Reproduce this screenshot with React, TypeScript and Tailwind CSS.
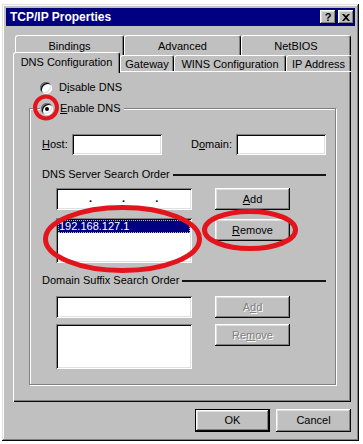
import React from 'react'

// win95 bevels
const raised =
  'shadow-[inset_-1px_-1px_#0a0a0a,inset_1px_1px_#ffffff,inset_-2px_-2px_#808080,inset_2px_2px_#dfdfdf]'
const sunken =
  'shadow-[inset_1px_1px_#808080,inset_-1px_-1px_#ffffff,inset_2px_2px_#0a0a0a,inset_-2px_-2px_#dfdfdf]'
const disabledText = 'text-[#808080] [text-shadow:1px_1px_0_#ffffff]'

function Btn({
  children,
  disabled,
  isDefault,
  className = '',
}: {
  children: React.ReactNode
  disabled?: boolean
  isDefault?: boolean
  className?: string
}) {
  if (isDefault) {
    return (
      <div className={`w-[75px] h-[23px] border border-black bg-[#c0c0c0] ${className}`}>
        <div className={`w-full h-full flex items-center justify-center ${raised}`}>{children}</div>
      </div>
    )
  }
  return (
    <div
      className={`w-[75px] h-[22px] bg-[#c0c0c0] flex items-center justify-center ${raised} ${
        disabled ? disabledText : ''
      } ${className}`}
    >
      {children}
    </div>
  )
}

function Radio({ checked }: { checked?: boolean }) {
  return (
    <div className={`w-[12px] h-[12px] rounded-full bg-white flex items-center justify-center ${sunken}`}>
      {checked && <div className="w-[4px] h-[4px] rounded-full bg-black" />}
    </div>
  )
}

function SectionLabel({ text }: { text: string }) {
  return (
    <div className="flex items-center h-[13px] w-[284px]">
      <span className="whitespace-nowrap">{text}</span>
      <div className="flex-1 ml-[3px] h-[2px] bg-[#141414]" />
    </div>
  )
}

function BackTab({ label, w }: { label: string; w: string }) {
  return (
    <div
      className={`${w} h-[20px] pt-[4px] text-center border-t border-l border-white border-r border-r-black rounded-t-[3px] shadow-[inset_-1px_0_#808080]`}
    >
      {label}
    </div>
  )
}

function FrontTab({ label, w }: { label: string; w: string }) {
  return (
    <div
      className={`${w} h-[16px] pt-[2px] text-center border-t border-l border-white border-r border-r-black rounded-t-[3px] shadow-[inset_-1px_0_#808080] bg-[#c0c0c0]`}
    >
      {label}
    </div>
  )
}

export default function App() {
  return (
    <div className="relative w-[363px] h-[444px] bg-white pt-[4px] pl-[2px] text-[11px] leading-[13px] text-black font-['Liberation_Sans',Arial,sans-serif]">
      <div className="w-[357px] h-[437px] bg-[#c0c0c0] p-[4px] shadow-[inset_-1px_-1px_#0a0a0a,inset_1px_1px_#dfdfdf,inset_-2px_-2px_#808080,inset_2px_2px_#ffffff]">
        {/* title bar */}
        <div className="flex items-center h-[18px] bg-[#000080] pl-[4px] pr-[1px]">
          <span className="flex-1 text-white font-bold text-[12px]">TCP/IP Properties</span>
          <div className={`w-[16px] h-[14px] bg-[#c0c0c0] flex items-center justify-center font-bold text-[11px] ${raised}`}>
            ?
          </div>
          <div className={`ml-[2px] w-[16px] h-[14px] bg-[#c0c0c0] flex items-center justify-center ${raised}`}>
            <svg width="8" height="7" viewBox="0 0 8 7">
              <path d="M0 0h2l2 2 2-2h2L5 3.5 8 7H6L4 5 2 7H0l3-3.5z" fill="#000" />
            </svg>
          </div>
        </div>

        <div className="ml-[7px] w-[338px] mt-[9px]">
          {/* tabs */}
          <div className="flex pl-[2px]">
            <BackTab label="Bindings" w="w-[109px]" />
            <BackTab label="Advanced" w="w-[117px]" />
            <BackTab label="NetBIOS" w="w-[110px]" />
          </div>
          <div className="relative z-10 flex items-end h-[19px] -mt-[3px]">
            <div className="w-[107px] h-[21px] -mb-[2px] pt-[3px] text-center bg-[#c0c0c0] border-t border-l border-white border-r border-r-black rounded-t-[3px] shadow-[inset_-1px_0_#808080]">
              DNS Configuration
            </div>
            <FrontTab label="Gateway" w="w-[54px]" />
            <FrontTab label="WINS Configuration" w="w-[112px]" />
            <FrontTab label="IP Address" w="w-[65px]" />
          </div>

          {/* panel */}
          <div className="h-[331px] pt-[10px] shadow-[inset_1px_1px_#ffffff,inset_-1px_-1px_#0a0a0a,inset_-2px_-2px_#808080]">
            <div className="flex items-center h-[13px] pl-[27px] gap-[7px]">
              <Radio />
              <span>
                D<u>i</u>sable DNS
              </span>
            </div>

            <div className="relative ml-[16px] mt-[14px] w-[307px] h-[277px] border border-[#808080] shadow-[inset_1px_1px_#ffffff,1px_1px_#ffffff] pl-[12px] pt-[25px]">
              <div className="absolute -top-[7px] left-[10px] flex items-center gap-[7px] bg-[#c0c0c0] pl-[1px] pr-[3px] h-[13px]">
                <Radio checked />
                <span>
                  <u>E</u>nable DNS
                </span>
              </div>

              <div className="flex items-center h-[21px]">
                <span className="w-[30px]">
                  <u>H</u>ost:
                </span>
                <div className={`w-[90px] h-[21px] bg-white ${sunken}`} />
                <span className="ml-[29px] w-[45px]">
                  D<u>o</u>main:
                </span>
                <div className={`w-[90px] h-[21px] bg-white ${sunken}`} />
              </div>

              <div className="mt-[13px]">
                <SectionLabel text="DNS Server Search Order" />
              </div>

              <div className="mt-[7px] ml-[14px] flex gap-[23px]">
                <div className={`w-[136px] h-[22px] bg-white flex items-start pt-[4px] font-bold ${sunken}`}>
                  <span className="w-[33px]" />
                  <span>.</span>
                  <span className="w-[30px]" />
                  <span>.</span>
                  <span className="w-[30px]" />
                  <span>.</span>
                </div>
                <Btn>
                  <u>A</u>dd
                </Btn>
              </div>

              <div className="mt-[8px] ml-[14px] flex gap-[23px] items-start">
                <div className={`w-[136px] h-[45px] bg-white p-[2px] ${sunken}`}>
                  <div className="h-[13px] bg-[#000080] text-white pl-[1px] outline-1 outline-dotted outline-[#c0c0c0] -outline-offset-1">
                    192.168.127.1
                  </div>
                </div>
                <Btn className="mt-[1px]">
                  <u>R</u>emove
                </Btn>
              </div>

              <div className="mt-[11px]">
                <SectionLabel text="Domain Suffix Search Order" />
              </div>

              <div className="mt-[9px] ml-[14px] flex gap-[23px]">
                <div className={`w-[136px] h-[22px] bg-white ${sunken}`} />
                <Btn disabled>
                  A<u>d</u>d
                </Btn>
              </div>

              <div className="mt-[6px] ml-[14px] flex gap-[23px] items-start">
                <div className={`w-[136px] h-[45px] bg-white ${sunken}`} />
                <Btn disabled>
                  Re<u>m</u>ove
                </Btn>
              </div>
            </div>
          </div>

          {/* dialog buttons */}
          <div className="mt-[7px] flex justify-end gap-[6px]">
            <Btn isDefault>OK</Btn>
            <div className={`w-[75px] h-[23px] bg-[#c0c0c0] flex items-center justify-center ${raised}`}>Cancel</div>
          </div>
        </div>
      </div>

      {/* red annotation marks */}
      <svg className="absolute inset-0 pointer-events-none" width="363" height="444">
        <circle cx="46" cy="107.5" r="11" fill="none" stroke="#e3141b" strokeWidth="4" />
        <ellipse cx="122.5" cy="239" rx="77" ry="31.5" fill="none" stroke="#e3141b" strokeWidth="5" />
        <ellipse cx="250" cy="230" rx="45.5" ry="18.5" fill="none" stroke="#e3141b" strokeWidth="5" />
      </svg>
    </div>
  )
}
